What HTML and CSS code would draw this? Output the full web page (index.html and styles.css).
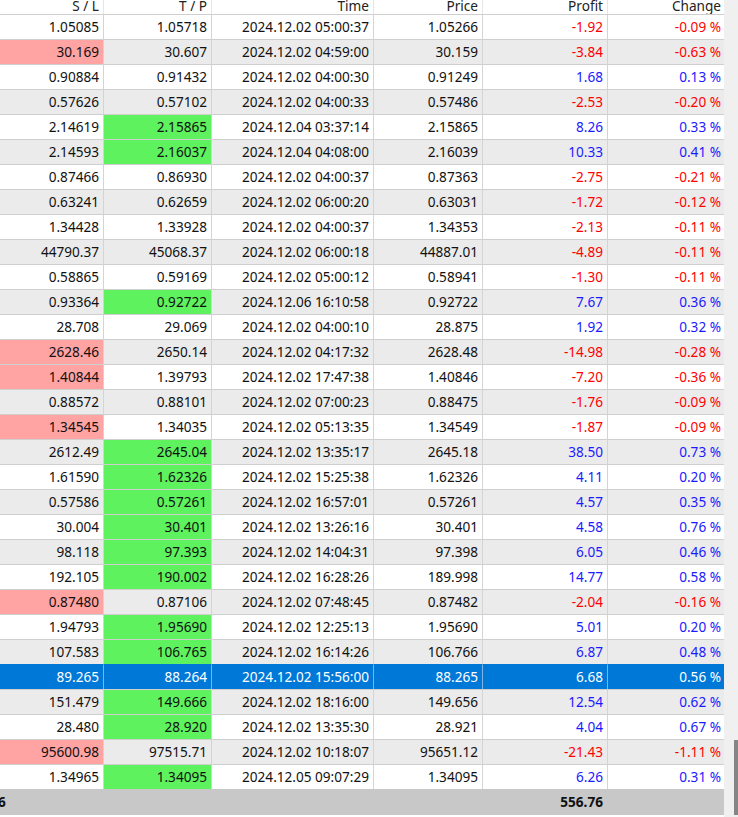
FILE: index.html
```html
<!DOCTYPE html>
<html>
<head>
<meta charset="utf-8">
<link rel="stylesheet" href="styles.css">
</head>
<body>
<div class="wrap">
  <div class="grid">
    <div class="hdr">
      <div class="h"><span>S / L</span></div>
      <div class="h"><span>T / P</span></div>
      <div class="h"><span>Time</span></div>
      <div class="h"><span>Price</span></div>
      <div class="h"><span>Profit</span></div>
      <div class="h last"><span>Change</span></div>
    </div>
    <div class="r"><div class="c">1.05085</div><div class="c">1.05718</div><div class="c">2024.12.02 05:00:37</div><div class="c">1.05266</div><div class="c neg">-1.92</div><div class="c neg last">-0.09 %</div></div>
    <div class="r alt"><div class="c lo">30.169</div><div class="c">30.607</div><div class="c">2024.12.02 04:59:00</div><div class="c">30.159</div><div class="c neg">-3.84</div><div class="c neg last">-0.63 %</div></div>
    <div class="r"><div class="c">0.90884</div><div class="c">0.91432</div><div class="c">2024.12.02 04:00:30</div><div class="c">0.91249</div><div class="c pos">1.68</div><div class="c pos last">0.13 %</div></div>
    <div class="r alt"><div class="c">0.57626</div><div class="c">0.57102</div><div class="c">2024.12.02 04:00:33</div><div class="c">0.57486</div><div class="c neg">-2.53</div><div class="c neg last">-0.20 %</div></div>
    <div class="r"><div class="c">2.14619</div><div class="c hi">2.15865</div><div class="c">2024.12.04 03:37:14</div><div class="c">2.15865</div><div class="c pos">8.26</div><div class="c pos last">0.33 %</div></div>
    <div class="r alt"><div class="c">2.14593</div><div class="c hi">2.16037</div><div class="c">2024.12.04 04:08:00</div><div class="c">2.16039</div><div class="c pos">10.33</div><div class="c pos last">0.41 %</div></div>
    <div class="r"><div class="c">0.87466</div><div class="c">0.86930</div><div class="c">2024.12.02 04:00:37</div><div class="c">0.87363</div><div class="c neg">-2.75</div><div class="c neg last">-0.21 %</div></div>
    <div class="r alt"><div class="c">0.63241</div><div class="c">0.62659</div><div class="c">2024.12.02 06:00:20</div><div class="c">0.63031</div><div class="c neg">-1.72</div><div class="c neg last">-0.12 %</div></div>
    <div class="r"><div class="c">1.34428</div><div class="c">1.33928</div><div class="c">2024.12.02 04:00:37</div><div class="c">1.34353</div><div class="c neg">-2.13</div><div class="c neg last">-0.11 %</div></div>
    <div class="r alt"><div class="c">44790.37</div><div class="c">45068.37</div><div class="c">2024.12.02 06:00:18</div><div class="c">44887.01</div><div class="c neg">-4.89</div><div class="c neg last">-0.11 %</div></div>
    <div class="r"><div class="c">0.58865</div><div class="c">0.59169</div><div class="c">2024.12.02 05:00:12</div><div class="c">0.58941</div><div class="c neg">-1.30</div><div class="c neg last">-0.11 %</div></div>
    <div class="r alt"><div class="c">0.93364</div><div class="c hi">0.92722</div><div class="c">2024.12.06 16:10:58</div><div class="c">0.92722</div><div class="c pos">7.67</div><div class="c pos last">0.36 %</div></div>
    <div class="r"><div class="c">28.708</div><div class="c">29.069</div><div class="c">2024.12.02 04:00:10</div><div class="c">28.875</div><div class="c pos">1.92</div><div class="c pos last">0.32 %</div></div>
    <div class="r alt"><div class="c lo">2628.46</div><div class="c">2650.14</div><div class="c">2024.12.02 04:17:32</div><div class="c">2628.48</div><div class="c neg">-14.98</div><div class="c neg last">-0.28 %</div></div>
    <div class="r"><div class="c lo">1.40844</div><div class="c">1.39793</div><div class="c">2024.12.02 17:47:38</div><div class="c">1.40846</div><div class="c neg">-7.20</div><div class="c neg last">-0.36 %</div></div>
    <div class="r alt"><div class="c">0.88572</div><div class="c">0.88101</div><div class="c">2024.12.02 07:00:23</div><div class="c">0.88475</div><div class="c neg">-1.76</div><div class="c neg last">-0.09 %</div></div>
    <div class="r"><div class="c lo">1.34545</div><div class="c">1.34035</div><div class="c">2024.12.02 05:13:35</div><div class="c">1.34549</div><div class="c neg">-1.87</div><div class="c neg last">-0.09 %</div></div>
    <div class="r alt"><div class="c">2612.49</div><div class="c hi">2645.04</div><div class="c">2024.12.02 13:35:17</div><div class="c">2645.18</div><div class="c pos">38.50</div><div class="c pos last">0.73 %</div></div>
    <div class="r"><div class="c">1.61590</div><div class="c hi">1.62326</div><div class="c">2024.12.02 15:25:38</div><div class="c">1.62326</div><div class="c pos">4.11</div><div class="c pos last">0.20 %</div></div>
    <div class="r alt"><div class="c">0.57586</div><div class="c hi">0.57261</div><div class="c">2024.12.02 16:57:01</div><div class="c">0.57261</div><div class="c pos">4.57</div><div class="c pos last">0.35 %</div></div>
    <div class="r"><div class="c">30.004</div><div class="c hi">30.401</div><div class="c">2024.12.02 13:26:16</div><div class="c">30.401</div><div class="c pos">4.58</div><div class="c pos last">0.76 %</div></div>
    <div class="r alt"><div class="c">98.118</div><div class="c hi">97.393</div><div class="c">2024.12.02 14:04:31</div><div class="c">97.398</div><div class="c pos">6.05</div><div class="c pos last">0.46 %</div></div>
    <div class="r"><div class="c">192.105</div><div class="c hi">190.002</div><div class="c">2024.12.02 16:28:26</div><div class="c">189.998</div><div class="c pos">14.77</div><div class="c pos last">0.58 %</div></div>
    <div class="r alt"><div class="c lo">0.87480</div><div class="c">0.87106</div><div class="c">2024.12.02 07:48:45</div><div class="c">0.87482</div><div class="c neg">-2.04</div><div class="c neg last">-0.16 %</div></div>
    <div class="r"><div class="c">1.94793</div><div class="c hi">1.95690</div><div class="c">2024.12.02 12:25:13</div><div class="c">1.95690</div><div class="c pos">5.01</div><div class="c pos last">0.20 %</div></div>
    <div class="r alt"><div class="c">107.583</div><div class="c hi">106.765</div><div class="c">2024.12.02 16:14:26</div><div class="c">106.766</div><div class="c pos">6.87</div><div class="c pos last">0.48 %</div></div>
    <div class="r sel"><div class="c">89.265</div><div class="c">88.264</div><div class="c">2024.12.02 15:56:00</div><div class="c">88.265</div><div class="c">6.68</div><div class="c last">0.56 %</div></div>
    <div class="r alt"><div class="c">151.479</div><div class="c hi">149.666</div><div class="c">2024.12.02 18:16:00</div><div class="c">149.656</div><div class="c pos">12.54</div><div class="c pos last">0.62 %</div></div>
    <div class="r"><div class="c">28.480</div><div class="c hi">28.920</div><div class="c">2024.12.02 13:35:30</div><div class="c">28.921</div><div class="c pos">4.04</div><div class="c pos last">0.67 %</div></div>
    <div class="r alt"><div class="c lo">95600.98</div><div class="c">97515.71</div><div class="c">2024.12.02 10:18:07</div><div class="c">95651.12</div><div class="c neg">-21.43</div><div class="c neg last">-1.11 %</div></div>
    <div class="r"><div class="c">1.34965</div><div class="c hi">1.34095</div><div class="c">2024.12.05 09:07:29</div><div class="c">1.34095</div><div class="c pos">6.26</div><div class="c pos last">0.31 %</div></div>
    <div class="foot">
      <div class="f left">6</div>
      <div class="f"></div>
      <div class="f"></div>
      <div class="f"></div>
      <div class="f total">556.76</div>
      <div class="f"></div>
    </div>
  </div>
  <div class="scroll"><div class="thumb"></div></div>
</div>
</body>
</html>
```

FILE: styles.css
```css
html, body {
  margin: 0;
  padding: 0;
  background: #ffffff;
}
body {
  font-family: "Segoe UI", "Noto Sans", "Open Sans", sans-serif;
  font-size: 13.6px;
  color: #111111;
  width: 738px;
  height: 817px;
  overflow: hidden;
}
.wrap {
  display: flex;
  height: 817px;
}
.grid {
  width: 724px;
  display: flex;
  flex-direction: column;
}
.hdr, .r, .foot {
  display: grid;
  grid-template-columns: 104px 108px 162px 109px 125px 116px;
}
.hdr {
  height: 14px;
  overflow: hidden;
  background: #ffffff;
}
.h {
  box-sizing: border-box;
  border-right: 1px solid #e6e6e6;
  display: flex;
  justify-content: flex-end;
  align-items: flex-end;
  padding: 0 4px 6px 0;
  color: #222222;
}
.h span {
  line-height: 12px;
  white-space: nowrap;
}
.r {
  height: 25px;
  background: #ffffff;
}
.r.alt {
  background: #ebebeb;
}
.c {
  box-sizing: border-box;
  border-right: 1px solid #d4d4d4;
  border-top: 1px solid #cfcfcf;
  padding-right: 4px;
  text-align: right;
  line-height: 23px;
  white-space: nowrap;
}
.r:first-of-type .c {
  border-top-color: #e8e8e8;
}
.last {
  border-right: none;
  padding-right: 3px;
}
.c.lo {
  background: #ffa3a3;
}
.c.hi {
  background: #5ef25e;
}
.c.neg {
  color: #ff0000;
}
.c.pos {
  color: #1a1aff;
}
.r.sel {
  background: #0078d7;
}
.r.sel .c {
  color: #ffffff;
  border-right-color: #7fb5e6;
  border-top-color: #0078d7;
}
.foot {
  height: 26px;
  background: #c8c8c8;
  font-weight: bold;
}
.f {
  line-height: 25px;
  text-align: right;
  padding-right: 4px;
  white-space: nowrap;
}
.f.left {
  text-align: left;
  padding: 0;
  margin-left: -2px;
}
.f.total {
  padding-right: 5px;
}
.scroll {
  width: 14px;
  background: #f0f0f0;
  display: flex;
  justify-content: flex-end;
}
.thumb {
  width: 4px;
  height: 75px;
  margin-top: 740px;
  background: #858585;
}
```
